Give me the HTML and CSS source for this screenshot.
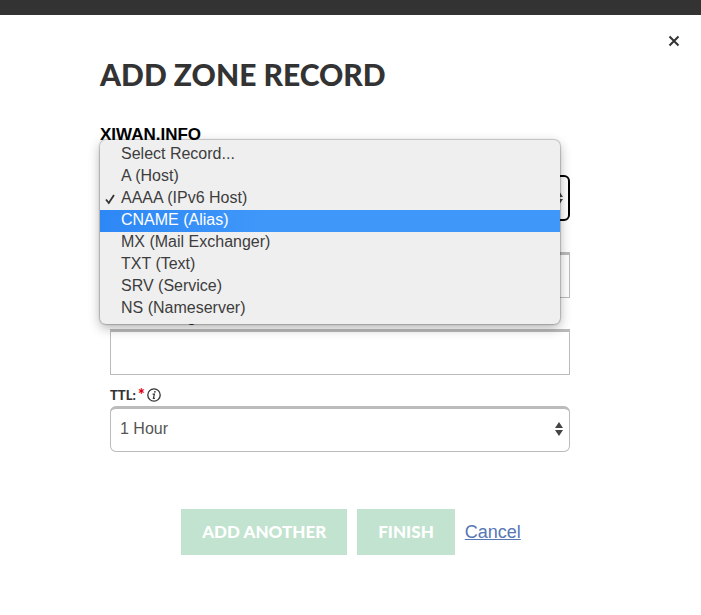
FILE: index.html
```html
<!DOCTYPE html>
<html lang="en">
<head>
<meta charset="utf-8">
<meta name="viewport" content="width=device-width, initial-scale=1">
<title>Add Zone Record</title>
<link rel="stylesheet" href="styles.css">
</head>
<body>
<div class="page-bar"></div>
<main class="dialog">
  <button class="close" type="button" aria-label="Close">
    <svg width="12" height="12" viewBox="0 0 12 12"><path d="M1.5 1.5l9 9M10.5 1.5l-9 9" stroke="#333" stroke-width="2" fill="none"/></svg>
  </button>
  <h1 class="title">ADD ZONE RECORD</h1>
  <h2 class="domain">XIWAN.INFO</h2>
  <form class="form">
    <div class="field">
      <div class="select-box">
        <select class="control rounded focused" aria-label="Record type"><option>AAAA (IPv6 Host)</option></select>
        <svg class="arrows" width="8" height="16" viewBox="0 0 8 16"><path d="M4 1l4 6H0zM0 9h8l-4 6z" fill="#444"/></svg>
        <ul class="menu" role="listbox" aria-label="Record type">
          <li class="option" role="option">Select Record...</li>
          <li class="option" role="option">A (Host)</li>
          <li class="option" role="option" aria-selected="true"><svg class="check" width="10" height="12" viewBox="0 0 10 12"><path d="M1 6.5l2.8 3.5L9 2" stroke="#333" stroke-width="1.8" fill="none"/></svg>AAAA (IPv6 Host)</li>
          <li class="option active" role="option">CNAME (Alias)</li>
          <li class="option" role="option">MX (Mail Exchanger)</li>
          <li class="option" role="option">TXT (Text)</li>
          <li class="option" role="option">SRV (Service)</li>
          <li class="option" role="option">NS (Nameserver)</li>
        </ul>
      </div>
    </div>
    <div class="field">
      <input class="control" aria-label="Host" type="text">
    </div>
    <div class="field">
      <label class="label" for="target">IPv6 Host Target:</label>
      <input class="control" id="target" type="text">
    </div>
    <div class="field">
      <label class="label" for="ttl">TTL: <span class="required">*</span>
        <svg class="info" width="14" height="14" viewBox="0 0 14 14"><circle cx="7" cy="7" r="6.2" fill="none" stroke="#333" stroke-width="1.3"/><circle cx="7.9" cy="3.8" r=".9" fill="#333"/><path d="M5.6 6.1h1.8l-1 4.3h1.5" fill="none" stroke="#333" stroke-width="1.2"/></svg>
      </label>
      <div class="select-box">
        <select class="control rounded" id="ttl"><option>1 Hour</option></select>
        <svg class="arrows" width="8" height="16" viewBox="0 0 8 16"><path d="M4 1l4 6H0zM0 9h8l-4 6z" fill="#444"/></svg>
      </div>
    </div>
    <div class="actions">
      <button class="button" type="button">ADD ANOTHER</button>
      <button class="button" type="button">FINISH</button>
      <a class="cancel" href="#">Cancel</a>
    </div>
  </form>
</main>
</body>
</html>
```
FILE: styles.css
```css
* { box-sizing: border-box; }
body {
  margin: 0;
  background: #fff;
  color: #333;
  font-family: "Liberation Sans", Arial, sans-serif;
  font-size: 16px;
}
.page-bar { height: 15px; background: #333; }
.dialog { position: relative; padding: 40px 100px; }
.close {
  position: absolute;
  top: 20px;
  right: 21px;
  display: flex;
  padding: 0;
  border: 0;
  background: none;
}
.title {
  margin: 0;
  font: 900 30px/38px Lato, sans-serif;
  white-space: nowrap;
}
.domain {
  margin: 32px 0 0;
  color: #000;
  font-size: 17px;
  line-height: 20px;
}
.form { padding: 0 31px 0 10px; }
.field {
  display: flex;
  flex-direction: column;
  justify-content: flex-end;
  height: 77px;
}
.field:first-child { height: 76px; }
.label {
  display: flex;
  align-items: center;
  gap: 2px;
  height: 24px;
  padding-top: 2px;
  font: 900 13px/16px Lato, sans-serif;
}
.required { color: #e00010; font-size: 16px; }
.control {
  display: block;
  width: 100%;
  height: 46px;
  margin: 0;
  padding: 0 9px 3px;
  border: 1px solid #bbb;
  border-top-width: 3px;
  border-radius: 0;
  outline: 0;
  appearance: none;
  background: #fff;
  color: #555;
  font: 16px/20px "Liberation Sans", Arial, sans-serif;
}
.rounded { border-radius: 6px; }
.focused { border: 2px solid #000; }
.select-box { position: relative; }
.arrows { position: absolute; top: 15px; right: 7px; }
.menu {
  position: absolute;
  z-index: 1;
  top: -35px;
  left: -10px;
  right: 10px;
  margin: 0;
  padding: 4px 0;
  list-style: none;
  border-radius: 6px;
  background: #efefef;
  box-shadow: 0 0 1px 1px rgba(0, 0, 0, .2), 0 4px 12px rgba(0, 0, 0, .3);
}
.option {
  position: relative;
  padding: 0 21px;
  line-height: 20px;
  height: 22px;
  color: #3d3d3d;
}
.active { background: linear-gradient(90deg, #2d87f5, #3f97fa 35%); color: #fff; }
.check { position: absolute; top: 5px; left: 5px; }
.actions {
  display: flex;
  align-items: center;
  justify-content: center;
  gap: 10px;
  margin-top: 57px;
  padding-left: 22px;
}
.button {
  height: 46px;
  padding: 0 21px;
  border: 0;
  background: #c2e3cf;
  color: #fff;
  font: 900 17px/24px Lato, sans-serif;
  white-space: nowrap;
}
.cancel { color: #5577b4; font-size: 18px; line-height: 24px; }
```
